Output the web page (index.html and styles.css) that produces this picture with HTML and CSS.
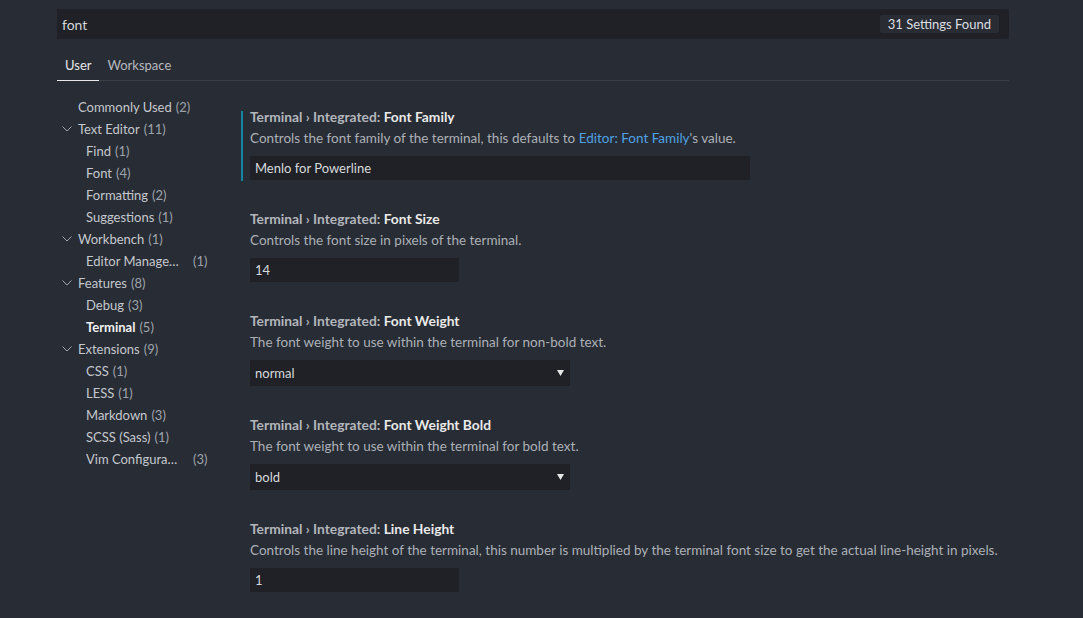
FILE: index.html
```html
<!DOCTYPE html>
<html>
<head>
<meta charset="utf-8">
<link rel="stylesheet" href="styles.css">
</head>
<body>
<div class="editor">
  <div class="search">
    <span class="query">font</span>
    <span class="badge">31 Settings Found</span>
  </div>
  <div class="tabs">
    <div class="tab active">User</div>
    <div class="tab">Workspace</div>
  </div>
  <div class="main">
    <ul class="toc">
      <li class="item top"><span class="chev"></span><span class="name">Commonly Used</span><span class="count">(2)</span></li>
      <li class="item top"><span class="chev"><svg viewBox="0 0 10 6" width="10" height="6"><path d="M0.5 0.5 L5 5 L9.5 0.5" fill="none" stroke="#a0a4ab" stroke-width="1"/></svg></span><span class="name">Text Editor</span><span class="count">(11)</span></li>
      <li class="item sub"><span class="name">Find</span><span class="count">(1)</span></li>
      <li class="item sub"><span class="name">Font</span><span class="count">(4)</span></li>
      <li class="item sub"><span class="name">Formatting</span><span class="count">(2)</span></li>
      <li class="item sub"><span class="name">Suggestions</span><span class="count">(1)</span></li>
      <li class="item top"><span class="chev"><svg viewBox="0 0 10 6" width="10" height="6"><path d="M0.5 0.5 L5 5 L9.5 0.5" fill="none" stroke="#a0a4ab" stroke-width="1"/></svg></span><span class="name">Workbench</span><span class="count">(1)</span></li>
      <li class="item sub"><span class="name trunc">Editor Management</span><span class="count gap">(1)</span></li>
      <li class="item top"><span class="chev"><svg viewBox="0 0 10 6" width="10" height="6"><path d="M0.5 0.5 L5 5 L9.5 0.5" fill="none" stroke="#a0a4ab" stroke-width="1"/></svg></span><span class="name">Features</span><span class="count">(8)</span></li>
      <li class="item sub"><span class="name">Debug</span><span class="count">(3)</span></li>
      <li class="item sub selected"><span class="name">Terminal</span><span class="count">(5)</span></li>
      <li class="item top"><span class="chev"><svg viewBox="0 0 10 6" width="10" height="6"><path d="M0.5 0.5 L5 5 L9.5 0.5" fill="none" stroke="#a0a4ab" stroke-width="1"/></svg></span><span class="name">Extensions</span><span class="count">(9)</span></li>
      <li class="item sub"><span class="name">CSS</span><span class="count">(1)</span></li>
      <li class="item sub"><span class="name">LESS</span><span class="count">(1)</span></li>
      <li class="item sub"><span class="name">Markdown</span><span class="count">(3)</span></li>
      <li class="item sub"><span class="name">SCSS (Sass)</span><span class="count">(1)</span></li>
      <li class="item sub"><span class="name trunc">Vim Configuration</span><span class="count gap">(3)</span></li>
    </ul>
    <div class="settings">
      <div class="setting focused">
        <div class="title"><span class="cat">Terminal › Integrated: </span>Font Family</div>
        <div class="desc">Controls the font family of the terminal, this defaults to <span class="link">Editor: Font Family</span>'s value.</div>
        <div class="field text wide">Menlo for Powerline</div>
      </div>
      <div class="setting">
        <div class="title"><span class="cat">Terminal › Integrated: </span>Font Size</div>
        <div class="desc">Controls the font size in pixels of the terminal.</div>
        <div class="field text narrow">14</div>
      </div>
      <div class="setting">
        <div class="title"><span class="cat">Terminal › Integrated: </span>Font Weight</div>
        <div class="desc">The font weight to use within the terminal for non-bold text.</div>
        <div class="field select"><span>normal</span><svg viewBox="0 0 7 6" width="7" height="6"><path d="M0 0 H7 L3.5 6 Z" fill="#e8e8e8"/></svg></div>
      </div>
      <div class="setting">
        <div class="title"><span class="cat">Terminal › Integrated: </span>Font Weight Bold</div>
        <div class="desc">The font weight to use within the terminal for bold text.</div>
        <div class="field select"><span>bold</span><svg viewBox="0 0 7 6" width="7" height="6"><path d="M0 0 H7 L3.5 6 Z" fill="#e8e8e8"/></svg></div>
      </div>
      <div class="setting">
        <div class="title"><span class="cat">Terminal › Integrated: </span>Line Height</div>
        <div class="desc">Controls the line height of the terminal, this number is multiplied by the terminal font size to get the actual line-height in pixels.</div>
        <div class="field text narrow">1</div>
      </div>
    </div>
  </div>
</div>
</body>
</html>
```
FILE: styles.css
```css
html, body {
  margin: 0;
  padding: 0;
  background: #282c34;
  height: 100%;
  overflow: hidden;
}
body {
  font-family: Lato, "Open Sans", sans-serif;
  font-size: 13px;
  color: #c8cbd0;
}
.editor {
  margin-left: 57px;
  width: 952px;
  padding-top: 9px;
}
.search {
  height: 30px;
  background: #1f2126;
  display: flex;
  align-items: center;
  justify-content: space-between;
  padding: 0 10px 0 5px;
  box-sizing: border-box;
}
.query {
  font-size: 14px;
  color: #d4d6da;
}
.badge {
  background: #292c33;
  color: #dcdee2;
  height: 18px;
  line-height: 18px;
  padding: 0 8px;
  border-radius: 2px;
  font-size: 13px;
}
.tabs {
  display: flex;
  margin-top: 12px;
  border-bottom: 1px solid #3a3e47;
}
.tab {
  padding: 4px 8px 5px;
  line-height: 20px;
  color: #b6b9bf;
  margin-bottom: -1px;
  border-bottom: 1px solid transparent;
}
.tab.active {
  color: #e4e6e9;
  border-bottom-color: #e8e8e8;
}
.main {
  display: flex;
  padding-top: 15px;
}
.toc {
  list-style: none;
  margin: 0;
  padding: 0;
  width: 184px;
  flex: none;
}
.item {
  display: flex;
  align-items: center;
  height: 22px;
  white-space: nowrap;
}
.item.top {
  padding-left: 5px;
}
.item.sub {
  padding-left: 29px;
}
.chev {
  width: 16px;
  flex: none;
  display: flex;
  align-items: center;
}
.name {
  color: #c5c8ce;
}
.name.trunc {
  max-width: 98px;
  overflow: hidden;
  text-overflow: ellipsis;
}
.count {
  color: #9ea3ab;
  margin-left: 4px;
}
.count.gap {
  margin-left: 9px;
}
.selected .name {
  font-weight: bold;
  color: #f0f0f0;
}
.settings {
  display: flex;
  flex-direction: column;
  gap: 32px;
  padding-top: 15px;
}
.setting {
  border-left: 2px solid transparent;
  padding-left: 7px;
  padding-bottom: 1px;
}
.setting.focused {
  border-left-color: #1583a4;
}
.title {
  font-weight: bold;
  font-size: 13.8px;
  line-height: 12px;
  color: #eaeaea;
}
.title .cat {
  color: #b3b6bc;
}
.desc {
  margin-top: 6px;
  font-size: 13.5px;
  line-height: 18px;
  color: #acb0b7;
  white-space: nowrap;
}
.link {
  color: #4ea2e4;
}
.field {
  margin-top: 9px;
  background: #1f2126;
  color: #d7d9dd;
  box-sizing: border-box;
  padding: 0 5px;
  display: flex;
  align-items: center;
}
.field.text {
  height: 24px;
}
.field.wide {
  width: 500px;
}
.field.narrow {
  width: 209px;
}
.field.select {
  height: 26px;
  width: 320px;
  justify-content: space-between;
  padding-right: 6px;
}
```
